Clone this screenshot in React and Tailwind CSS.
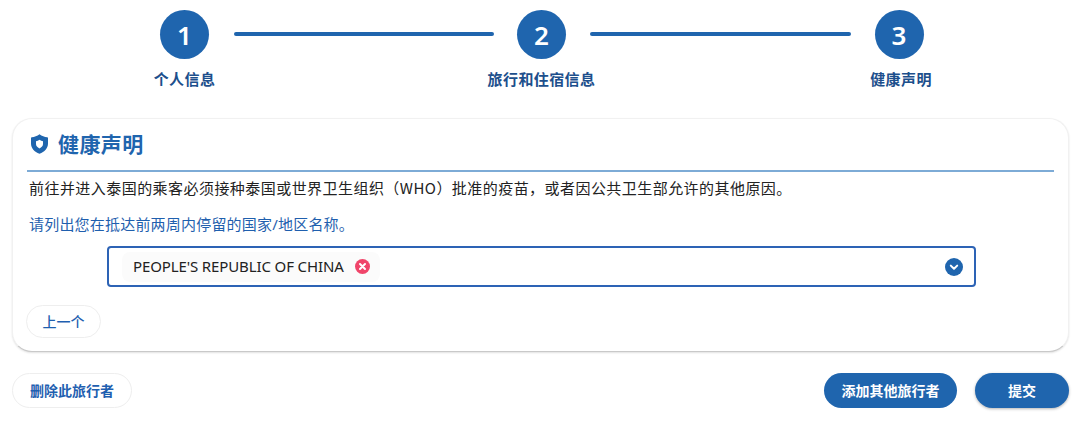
const FONT = "font-['Noto_Sans','Noto_Sans_CJK_SC',sans-serif]";

function Step({ num, label, labelClass = "" }) {
  return (
    <div className="flex flex-col items-center w-[49px] shrink-0">
      <div className="w-[49px] h-[49px] rounded-full bg-[#1f65ae] flex items-center justify-center text-white text-[26px] font-semibold leading-none">
        {num}
      </div>
      <div className={`mt-[10px] whitespace-nowrap text-[15px] leading-[20px] font-semibold tracking-[0.4px] text-[#1d4f8c] ${labelClass}`}>
        {label}
      </div>
    </div>
  );
}

function Line({ className }) {
  return <div className={`h-[4px] mt-[22px] rounded-full bg-[#1f65ae] shrink-0 ${className}`} />;
}

function ShieldIcon() {
  return (
    <svg width="17" height="20" viewBox="0 0 17 20" className="shrink-0">
      <path d="M8.5 0.2 C10.8 1.9 13.6 3 16.2 3.2 C16.7 3.2 17 3.6 17 4 V9.4 C17 14 13.6 17.9 8.5 19.8 C3.4 17.9 0 14 0 9.4 V4 C0 3.6 0.3 3.2 0.8 3.2 C3.4 3 6.2 1.9 8.5 0.2 Z" fill="#1f65ae" />
      <path d="M8.5 5.8 C9.6 6.6 10.8 7.1 12 7.3 V10 C12 12 10.6 13.5 8.5 14.4 C6.4 13.5 5 12 5 10 V7.3 C6.2 7.1 7.4 6.6 8.5 5.8 Z" fill="#fff" />
    </svg>
  );
}

export default function App() {
  return (
    <div className={`w-[1080px] h-[432px] bg-white overflow-hidden ${FONT}`}>
      <div className="flex items-start pl-[160px] pt-[10px] h-[118px]">
        <Step num="1" label="个人信息" />
        <Line className="w-[260px] ml-[25px] mr-[23px]" />
        <Step num="2" label="旅行和住宿信息" />
        <Line className="w-[261px] ml-[24px] mr-[23.5px]" />
        <Step num="3" label="健康声明" labelClass="ml-[4px]" />
      </div>

      <div className="mx-[12px] w-[1057px] h-[234px] rounded-[20px] border border-[#f1f1f1] border-b-[#c9c9c9] shadow-[0_1px_2px_rgba(0,0,0,0.12)] px-[14px] pt-[11px] bg-white">
        <div className="flex items-center gap-[10px] h-[28px] pl-[4px]">
          <ShieldIcon />
          <h2 className="text-[21px] leading-[28px] font-bold tracking-[0.4px] text-[#1f65ae]">健康声明</h2>
        </div>
        <div className="mt-[12px] h-[2px] bg-[#7dabd6]" />
        <p className="mt-[5px] pl-[2px] text-[15px] leading-[22px] tracking-[0.45px] text-[#222]">
          前往并进入泰国的乘客必须接种泰国或世界卫生组织（<span className="font-['Noto_Sans_CJK_SC',sans-serif]">WHO</span>）批准的疫苗，或者因公共卫生部允许的其他原因。
        </p>
        <p className="mt-[14px] pl-[2px] text-[15px] leading-[22px] tracking-[0.2px] text-[#1f5fae]">
          请列出您在抵达前两周内停留的国家/地区名称。
        </p>
        <div className="ml-[80px] mt-[11px] w-[869px] h-[41px] rounded-[4px] border-2 border-[#2d63b5] flex items-center justify-between pl-[13px] pr-[11px]">
          <div className="flex items-center h-[30px] w-[258px] pl-[11px] rounded-[8px] bg-[#fbfbfb]">
            <span className="text-[15px] tracking-[-0.12px] text-[#222] whitespace-nowrap">PEOPLE'S REPUBLIC OF CHINA</span>
            <svg width="15" height="15" viewBox="0 0 15 15" className="ml-[11px] shrink-0">
              <circle cx="7.5" cy="7.5" r="7.5" fill="#f0456a" />
              <path d="M5 5 L10 10 M10 5 L5 10" stroke="#fff" strokeWidth="2" strokeLinecap="round" />
            </svg>
          </div>
          <svg width="18" height="18" viewBox="0 0 18 18" className="shrink-0">
            <circle cx="9" cy="9" r="9" fill="#1f65ae" />
            <path d="M5.8 7.6 L9 10.8 L12.2 7.6" fill="none" stroke="#fff" strokeWidth="2" strokeLinecap="round" strokeLinejoin="round" />
          </svg>
        </div>
        <button className="mt-[18px] -ml-[1px] w-[75px] h-[33px] rounded-full border border-[#eeeeee] bg-white text-[14px] font-medium text-[#1f5fb0]">
          上一个
        </button>
      </div>

      <div className="flex items-start justify-between mt-[21px] pl-[12px] pr-[11px]">
        <button className="w-[120px] h-[35px] rounded-full border border-[#eeeeee] bg-white text-[14px] font-semibold text-[#1f5fb0]">
          删除此旅行者
        </button>
        <div className="flex gap-[18px]">
          <button className="w-[133px] h-[35px] rounded-full bg-[#1f65ae] text-[14px] font-semibold text-white">
            添加其他旅行者
          </button>
          <button className="w-[94px] h-[35px] rounded-full bg-[#1f65ae] text-[14px] font-semibold text-white shadow-[0_1px_3px_rgba(0,0,0,0.3)]">
            提交
          </button>
        </div>
      </div>
    </div>
  );
}
